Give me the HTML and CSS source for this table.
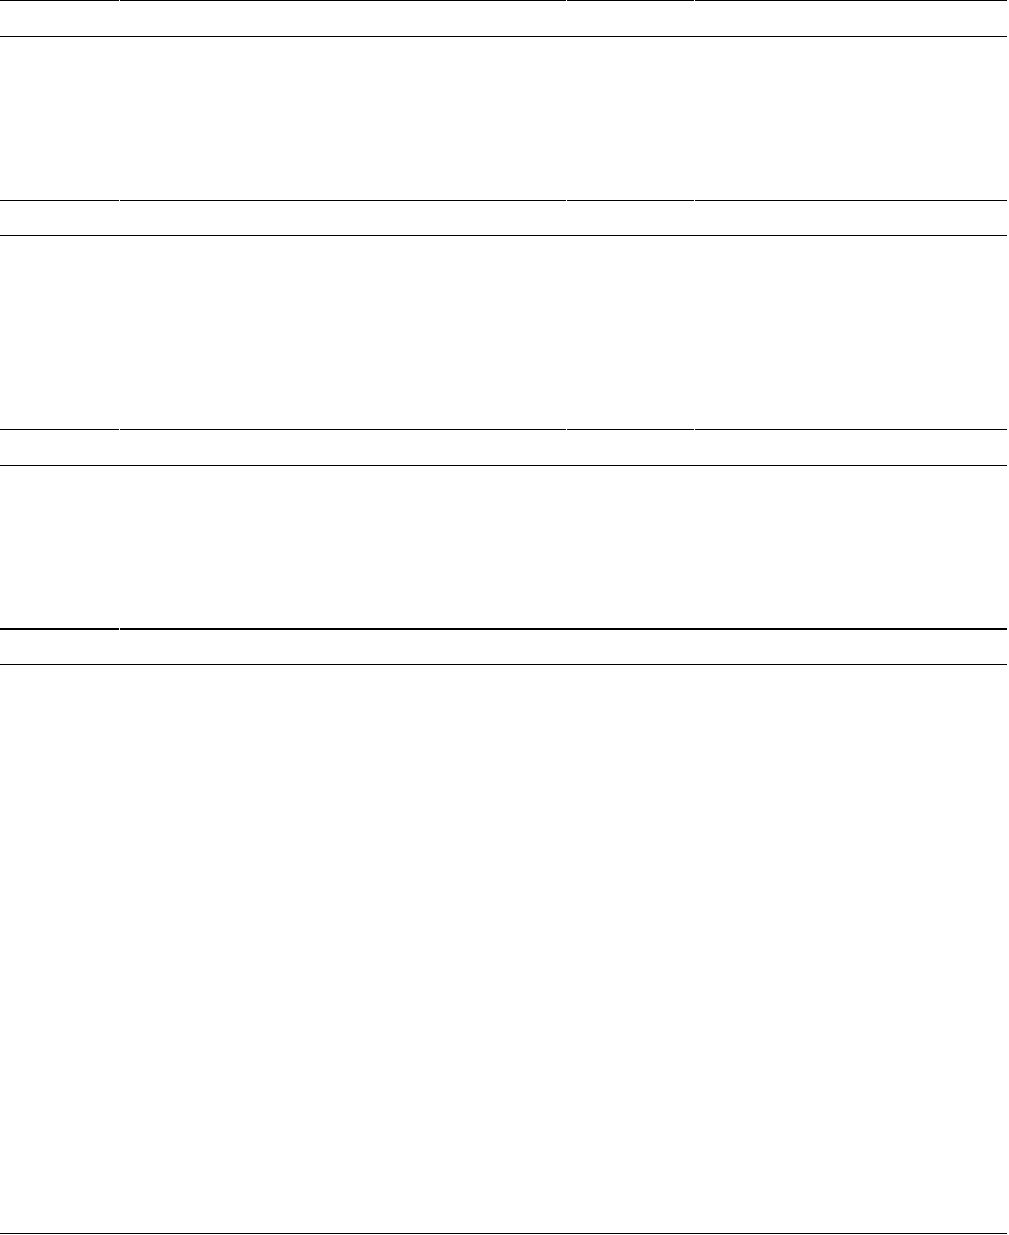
FILE: index.html
```html
<!DOCTYPE html>
<html lang="en">
<head>
    <meta charset="UTF-8">
    <meta name="viewport" content="width=device-width, initial-scale=1.0">
    <title>Spec sheet</title>
    <link rel="stylesheet" href="styles.css">
</head>
<body>
    <div class="sheet">
        <section class="block block-first">
            <div class="head">
                <div class="cell col-label"></div>
                <div class="cell col-desc"></div>
                <div class="cell col-type"></div>
                <div class="cell col-value"></div>
            </div>
            <div class="body"></div>
        </section>

        <section class="block block-second">
            <div class="head">
                <div class="cell col-label"></div>
                <div class="cell col-desc"></div>
                <div class="cell col-type"></div>
                <div class="cell col-value"></div>
            </div>
            <div class="body"></div>
        </section>

        <section class="block block-third">
            <div class="head">
                <div class="cell col-label"></div>
                <div class="cell col-desc"></div>
                <div class="cell col-type"></div>
                <div class="cell col-value"></div>
            </div>
            <div class="body"></div>
        </section>

        <section class="block block-notes">
            <div class="head head-thick">
                <div class="cell col-label"></div>
                <div class="cell col-wide"></div>
            </div>
            <div class="body"></div>
        </section>
    </div>
</body>
</html>
```

FILE: styles.css
```css
body {
    margin: 0;
    font-family: 'Liberation Sans', Arial, sans-serif;
    background-color: #fff;
    color: #000;
}

.sheet {
    width: 1007px;
    display: flex;
    flex-direction: column;
}

.head {
    display: flex;
    gap: 1px;
    border-bottom: 1px solid #000;
}

.cell {
    height: 35px;
    border-top: 1px solid #000;
}

.block-second .cell {
    height: 34px;
}

.head-thick .cell {
    height: 34px;
    border-top-width: 2px;
}

.col-label {
    width: 119px;
}

.col-desc {
    width: 446px;
}

.col-type {
    width: 127px;
}

.col-value {
    flex: 1;
}

.col-wide {
    flex: 1;
}

.block-first .body {
    height: 163px;
}

.block-second .body {
    height: 193px;
}

.block-third .body {
    height: 162px;
}

.block-notes .body {
    height: 568px;
    border-bottom: 1px solid #000;
}
```
